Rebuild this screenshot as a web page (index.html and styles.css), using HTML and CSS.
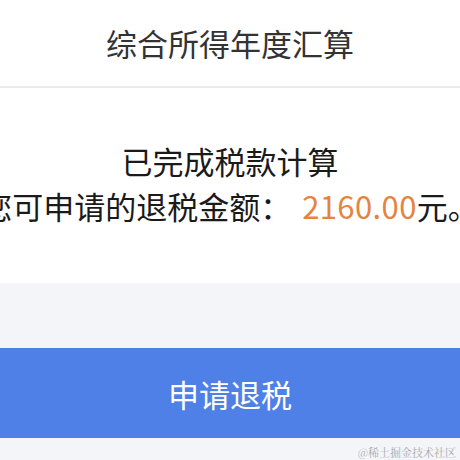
FILE: index.html
```html
<!DOCTYPE html>
<html lang="zh-CN">
<head>
  <meta charset="UTF-8" />
  <meta name="viewport" content="width=device-width, initial-scale=1.0"/>
  <title>综合所得年度汇算</title>
  <link rel="stylesheet" href="styles.css">
</head>
<body>
  <div class="header">综合所得年度汇算</div>

  <div class="result">
    <div class="line">已完成税款计算</div>
    <div class="line">您可申请的退税金额： <span class="amount">2160.00</span>元。</div>
  </div>

  <div class="footer">
    <button class="btn">申请退税</button>
    <div class="mark">@稀土掘金技术社区</div>
  </div>
</body>
</html>
```

FILE: styles.css
```css
body {
  font-family: "Noto Sans CJK SC", "Noto Sans", sans-serif;
  background: #f4f5f9;
  margin: 0;
  width: 460px;
  height: 460px;
  overflow: hidden;
}
.header {
  height: 86px;
  line-height: 86px;
  background: white;
  border-bottom: 2px solid #ebebeb;
  text-align: center;
  font-size: 31px;
  color: #333;
}
.result {
  background: white;
  display: flex;
  flex-direction: column;
  align-items: center;
  padding: 50px 0 55px;
}
.line {
  font-size: 31px;
  line-height: 45px;
  color: #1a1a1a;
  white-space: nowrap;
}
.amount {
  color: #e5843f;
  margin-left: 4px;
  letter-spacing: 0.4px;
}
.footer {
  padding-top: 65px;
}
.btn {
  display: block;
  width: 100%;
  height: 90px;
  border: none;
  background: #4f80e8;
  color: white;
  font-family: inherit;
  font-size: 31px;
}
.mark {
  text-align: right;
  font-size: 11px;
  color: #aaa;
  padding: 6px 4px 0 0;
  font-family: "Noto Serif CJK SC", "Noto Sans CJK SC", serif;
}
```
